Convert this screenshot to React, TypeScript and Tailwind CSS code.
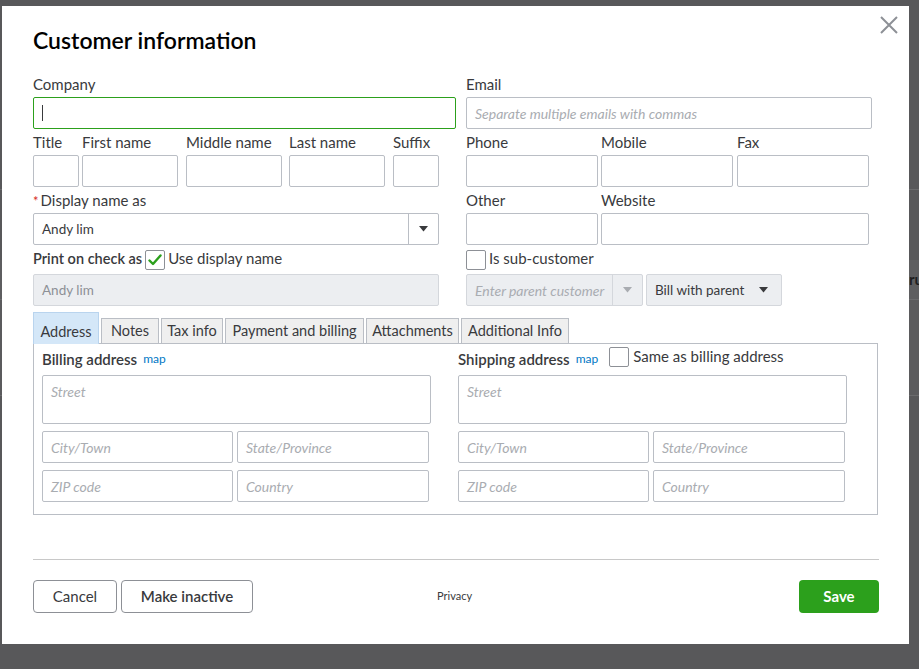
import React from "react";

const FONT = { fontFamily: "Lato, 'Open Sans', sans-serif" };

function Label({ children, className = "" }: { children: React.ReactNode; className?: string }) {
  return (
    <div className={"h-[18px] leading-[18px] text-[15px] text-[#393a3d] mb-[4px] whitespace-nowrap " + className}>
      {children}
    </div>
  );
}

function Input({ w, placeholder, value, className = "" }: { w: string; placeholder?: string; value?: string; className?: string }) {
  return (
    <div className={"h-[32px] border border-[#babec5] rounded-[2px] bg-white flex items-center px-[8px] text-[14px] " + w + " " + className}>
      {placeholder ? <span className="italic text-[#a9acb1] whitespace-nowrap">{placeholder}</span> : null}
      {value ? <span className="text-[#393a3d]">{value}</span> : null}
    </div>
  );
}

function Field({ label, w, placeholder, className = "" }: { label: string; w: string; placeholder?: string; className?: string }) {
  return (
    <div className={"flex flex-col " + w + " " + className}>
      <Label>{label}</Label>
      <Input w={w} placeholder={placeholder} />
    </div>
  );
}

function Arrow({ color = "#393a3d" }: { color?: string }) {
  return (
    <svg width="9" height="6" viewBox="0 0 9 6">
      <path d="M0 0 L9 0 L4.5 5.5 Z" fill={color} />
    </svg>
  );
}

function Checkbox({ checked }: { checked?: boolean }) {
  return (
    <div className="w-[20px] h-[20px] border border-[#8d9096] rounded-[2px] bg-white flex items-center justify-center shrink-0">
      {checked ? (
        <svg width="14" height="12" viewBox="0 0 14 12">
          <path d="M1.5 6.5 L5 10 L12.5 1.5" fill="none" stroke="#2ca01c" strokeWidth="2.4" strokeLinecap="round" strokeLinejoin="round" />
        </svg>
      ) : null}
    </div>
  );
}

function AddressBlock({ title, same }: { title: string; same?: boolean }) {
  return (
    <div className="flex flex-col w-[389px]">
      <div className="h-[24px] flex items-center gap-[6px]">
        <span className="text-[15px] font-semibold text-[#393a3d] whitespace-nowrap">{title}</span>
        <span className="text-[12px] text-[#0077c5]">map</span>
        {same ? (
          <div className="flex items-center gap-[4px] ml-[5px] -mt-[4px]">
            <Checkbox />
            <span className="text-[15px] text-[#393a3d] whitespace-nowrap -mt-[2px]">Same as billing address</span>
          </div>
        ) : null}
      </div>
      <div className="mt-[4px] h-[49px] border border-[#babec5] rounded-[2px] px-[8px] pt-[5px] text-[14px] italic text-[#a9acb1]">
        Street
      </div>
      <div className="mt-[7px] flex gap-[4px]">
        <Input w="w-[191px]" placeholder="City/Town" className="h-[31px]" />
        <Input w="w-[192px]" placeholder="State/Province" className="h-[31px]" />
      </div>
      <div className="mt-[7px] flex gap-[4px]">
        <Input w="w-[191px]" placeholder="ZIP code" className="h-[31px]" />
        <Input w="w-[192px]" placeholder="Country" className="h-[31px]" />
      </div>
    </div>
  );
}

const tabs = [
  { name: "Address", w: "w-[66px]" },
  { name: "Notes", w: "w-[58px]" },
  { name: "Tax info", w: "w-[62px]" },
  { name: "Payment and billing", w: "w-[139px]" },
  { name: "Attachments", w: "w-[93px]" },
  { name: "Additional Info", w: "w-[108px]" },
];

export default function App() {
  return (
    <div className="w-[919px] h-[669px] bg-[#58585a] relative overflow-hidden" style={FONT}>
      {/* background page seen through overlay */}
      <div className="flex flex-col w-full h-full">
        <div className="h-[190px] border-b border-[#6b6b6d]" />
        <div className="h-[70px]" />
        <div className="h-[40px] bg-[#5e5e60] border-b border-[#6b6b6d] flex items-center justify-end">
          <span className="text-[15px] font-bold text-[#1f1f1f] mr-[-4px]">ru</span>
        </div>
        <div className="h-[96px] bg-[#5b5b5d] border-b border-[#6b6b6d]" />
      </div>

      {/* modal */}
      <div className="absolute left-[2px] top-[6px] w-[907px] h-[638px] bg-white">
        <button className="absolute left-[878px] top-[10px] w-[18px] h-[18px]">
          <svg width="18" height="18" viewBox="0 0 18 18">
            <path d="M1 1 L17 17 M17 1 L1 17" stroke="#8d9096" strokeWidth="2" />
          </svg>
        </button>

        <div className="pl-[31px] pt-[16px] flex flex-col">
          <div className="h-[36px] leading-[36px] text-[23px] font-semibold text-[#000000]">Customer information</div>

          {/* row 1 */}
          <div className="mt-[17px] flex gap-[10px]">
            <div className="flex flex-col w-[423px]">
              <Label>Company</Label>
              <div className="h-[32px] border border-[#2ca01c] rounded-[2px] flex items-center pl-[8px]">
                <div className="w-px h-[16px] bg-[#393a3d]" />
              </div>
            </div>
            <Field label="Email" w="w-[406px]" placeholder="Separate multiple emails with commas" />
          </div>

          {/* row 2 */}
          <div className="mt-[4px] flex gap-[10px]">
            <div className="flex w-[423px]">
              <Field label="Title" w="w-[46px]" />
              <div className="w-[3px]" />
              <Field label="First name" w="w-[96px]" />
              <div className="w-[8px]" />
              <Field label="Middle name" w="w-[96px]" />
              <div className="w-[7px]" />
              <Field label="Last name" w="w-[96px]" />
              <div className="w-[8px]" />
              <Field label="Suffix" w="w-[46px]" />
            </div>
            <div className="flex gap-[3px]">
              <Field label="Phone" w="w-[132px]" />
              <Field label="Mobile" w="w-[132px]" />
              <Field label="Fax" w="w-[132px]" className="ml-[1px]" />
            </div>
          </div>

          {/* row 3 */}
          <div className="mt-[4px] flex gap-[10px]">
            <div className="flex flex-col w-[423px]">
              <Label>
                <span className="text-[#d52b1e] text-[13px] mr-[2px]">*</span>Display name as
              </Label>
              <div className="w-[406px] h-[32px] border border-[#babec5] rounded-[2px] flex items-center">
                <div className="flex-1 px-[8px] text-[13.5px] text-[#393a3d]">Andy lim</div>
                <div className="w-[30px] h-full border-l border-[#babec5] flex items-center justify-center">
                  <Arrow />
                </div>
              </div>
            </div>
            <div className="flex gap-[3px]">
              <Field label="Other" w="w-[132px]" />
              <Field label="Website" w="w-[268px]" />
            </div>
          </div>

          {/* row 4 */}
          <div className="mt-[5px] h-[20px] flex gap-[10px]">
            <div className="w-[423px] flex items-center gap-[3px]">
              <span className="text-[14.5px] font-semibold text-[#393a3d] whitespace-nowrap -mt-[3px]">Print on check as</span>
              <Checkbox checked />
              <span className="text-[15px] text-[#393a3d] whitespace-nowrap -mt-[3px]">Use display name</span>
            </div>
            <div className="flex items-center gap-[3px]">
              <Checkbox />
              <span className="text-[15px] text-[#393a3d] whitespace-nowrap -mt-[3px]">Is sub-customer</span>
            </div>
          </div>

          {/* row 5 */}
          <div className="mt-[4px] flex gap-[10px]">
            <div className="w-[423px]">
              <div className="w-[406px] h-[32px] border border-[#d4d7dc] bg-[#eceef1] rounded-[2px] flex items-center px-[8px] text-[13.5px] text-[#8d9096]">
                Andy lim
              </div>
            </div>
            <div className="flex gap-[3px]">
              <div className="w-[177px] h-[32px] border border-[#d4d7dc] bg-[#eceef1] rounded-[2px] flex items-center">
                <div className="flex-1 pl-[8px] text-[14px] italic text-[#a9acb1] whitespace-nowrap overflow-hidden">Enter parent customer</div>
                <div className="w-[30px] h-full border-l border-[#d4d7dc] flex items-center justify-center">
                  <Arrow color="#a9acb1" />
                </div>
              </div>
              <div className="w-[136px] h-[32px] border border-[#d4d7dc] bg-[#eceef1] rounded-[2px] flex items-center justify-between pl-[8px] pr-[13px] text-[13.5px] text-[#393a3d]">
                <span>Bill with parent</span>
                <Arrow />
              </div>
            </div>
          </div>

          {/* tabs */}
          <div className="mt-[6px] flex items-end gap-[2px] h-[31px] relative z-10">
            {tabs.map((t, i) =>
              i === 0 ? (
                <div
                  key={t.name}
                  className={"h-[32px] -mb-px pt-[6px] bg-[#d4e7f8] border border-b-0 border-[#b9d4ee] flex items-center justify-center text-[14.5px] text-[#393a3d] " + t.w}
                >
                  {t.name}
                </div>
              ) : (
                <div
                  key={t.name}
                  className={"h-[25px] bg-[#efefef] border border-b-0 border-[#babec5] flex items-center justify-center text-[14.5px] text-[#393a3d] whitespace-nowrap " + t.w}
                >
                  {t.name}
                </div>
              )
            )}
          </div>

          {/* tab panel */}
          <div className="w-[845px] h-[172px] border border-[#babec5] flex gap-[27px] pl-[8px] pt-[3px]">
            <AddressBlock title="Billing address" />
            <AddressBlock title="Shipping address" same />
          </div>

          {/* footer */}
          <div className="mt-[44px] w-[846px] h-px bg-[#c8c8c8]" />
          <div className="mt-[20px] w-[846px] flex items-center">
            <button className="w-[84px] h-[33px] border border-[#8d9096] rounded-[4px] text-[15px] text-[#393a3d]">Cancel</button>
            <button className="ml-[4px] w-[132px] h-[33px] border border-[#8d9096] rounded-[4px] text-[15px] font-semibold text-[#393a3d]">
              Make inactive
            </button>
            <div className="flex-1 pl-[184px] text-[11px] text-[#393a3d]">Privacy</div>
            <button className="w-[80px] h-[33px] bg-[#2ca01c] rounded-[4px] text-[15px] font-bold text-white">Save</button>
          </div>
        </div>
      </div>
    </div>
  );
}
